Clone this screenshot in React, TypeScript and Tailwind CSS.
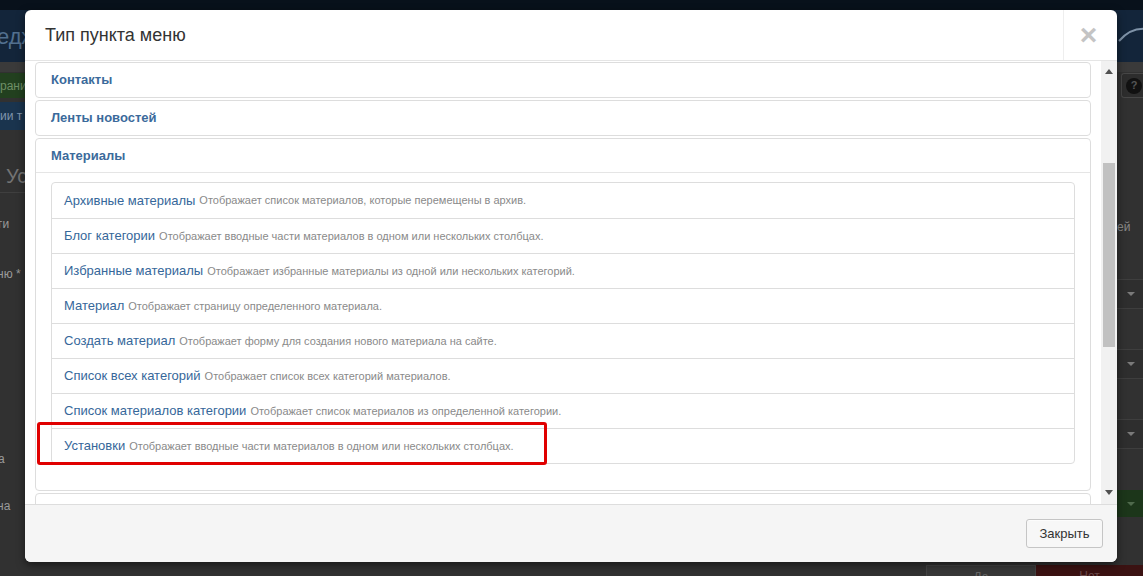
const items = [
  { title: "Архивные материалы", desc: "Отображает список материалов, которые перемещены в архив." },
  { title: "Блог категории", desc: "Отображает вводные части материалов в одном или нескольких столбцах." },
  { title: "Избранные материалы", desc: "Отображает избранные материалы из одной или нескольких категорий." },
  { title: "Материал", desc: "Отображает страницу определенного материала." },
  { title: "Создать материал", desc: "Отображает форму для создания нового материала на сайте." },
  { title: "Список всех категорий", desc: "Отображает список всех категорий материалов." },
  { title: "Список материалов категории", desc: "Отображает список материалов из определенной категории." },
  { title: "Установки", desc: "Отображает вводные части материалов в одном или нескольких столбцах." },
];

const Caret = ({ color = "#7a7a7a" }: { color?: string }) => (
  <svg width="8" height="4" viewBox="0 0 8 4">
    <path d="M0 0 L8 0 L4 4 Z" fill={color} />
  </svg>
);

const App = () => {
  return (
    <div className="relative h-[576px] w-[1143px] overflow-hidden bg-[#313131] font-['Liberation_Sans',Arial,sans-serif]">
      {/* page behind the modal */}
      <div className="flex flex-col">
        <div className="h-[10px] bg-[#08111b]" />
        <div className="flex h-[52px] items-center justify-between bg-[#13253a]">
          <span className="-ml-[3px] text-[22px] text-[#52708f]">едж</span>
          <svg width="30" height="30" viewBox="0 0 30 30" className="mr-[-4px]">
            <path d="M2 20 Q14 6 30 8" stroke="#7f93a8" strokeWidth="2" fill="none" />
          </svg>
        </div>

        <div className="flex h-[503px] justify-between">
          {/* left edge */}
          <div className="flex w-[40px] flex-col">
            <div className="h-[10px] bg-[#3a3a3a]" />
            <div className="mt-[1px] flex h-[25px] items-center bg-[#22401f] text-[12px] text-[#6e8f66]">рани</div>
            <div className="mt-[4px] flex h-[28px] items-center bg-[#1a344e] text-[12px] text-[#8096ad]">ии т</div>
            <div className="h-[30px]" />
            <div className="flex h-[33px] items-center border-b border-[#3f3f3f] pl-[6px] text-[20px] text-[#747474]">Ус</div>
            <div className="flex h-[62px] items-center -ml-[2px] text-[12px] text-[#9a9a9a]">ги</div>
            <div className="flex h-[38px] items-center -ml-[3px] text-[12px] text-[#9a9a9a]">ню *</div>
            <div className="h-[151px]" />
            <div className="flex h-[30px] items-center -ml-[2px] text-[12px] text-[#9a9a9a]">а</div>
            <div className="h-[17px]" />
            <div className="flex h-[30px] items-center -ml-[3px] text-[12px] text-[#9a9a9a]">на</div>
          </div>

          {/* right edge */}
          <div className="flex w-[40px] flex-col items-end">
            <div className="h-[10px] w-full bg-[#3a3a3a]" />
            <div className="mt-[1px] flex h-[25px] w-[22px] items-center rounded-l-[3px] border border-r-0 border-[#474747] bg-[#2d2d2d] pl-[4px]">
              <span className="flex h-[16px] w-[16px] items-center justify-center rounded-full bg-[#111] text-[11px] font-bold text-[#555]">?</span>
            </div>
            <div className="h-[114px]" />
            <div className="flex h-[30px] w-full items-center text-[12px] text-[#8a8a8a]">
              <span className="ml-[14px]">ей</span>
            </div>
            <div className="h-[37px]" />
            <div className="flex h-[30px] w-full items-center justify-end border-y border-[#3e3e3e] bg-[#2e2e2e] pr-[8px]"><Caret /></div>
            <div className="h-[40px]" />
            <div className="flex h-[30px] w-full items-center justify-end border-y border-[#3e3e3e] bg-[#2e2e2e] pr-[8px]"><Caret /></div>
            <div className="h-[40px]" />
            <div className="flex h-[30px] w-full items-center justify-end border-y border-[#3e3e3e] bg-[#2e2e2e] pr-[8px]"><Caret /></div>
            <div className="h-[41px]" />
            <div className="flex h-[27px] w-full items-center justify-end bg-[#1c361a] pr-[8px]"><Caret color="#4f6a4c" /></div>
          </div>
        </div>

        <div className="flex h-[20px] justify-end">
          <span className="flex w-[110px] justify-center border border-[#444] bg-[#383838] pt-[2px] text-[12px] text-[#666]">Да</span>
          <span className="flex w-[107px] justify-center bg-[#3b1212] pt-[2px] text-[12px] text-[#6a4a4a]">Нет</span>
        </div>
      </div>

      {/* modal */}
      <div className="absolute left-[25px] top-[10px] flex h-[552px] w-[1092px] flex-col overflow-hidden rounded-[6px] bg-white shadow-[0_3px_9px_rgba(0,0,0,0.5)]">
        <div className="flex h-[51px] shrink-0 border-b border-[#e5e5e5]">
          <h3 className="flex flex-1 items-center pl-[20px] text-[18px] text-[#333]">Тип пункта меню</h3>
          <div className="flex w-[54px] items-center justify-center border-l border-[#eee] pb-[1px] pr-[4px] text-[30px] font-bold leading-none text-[#c4c4c4]">
            ×
          </div>
        </div>

        <div className="flex min-h-0 flex-1">
          <div className="flex-1 overflow-hidden px-[10px] pt-[1px]">
            <div className="mb-[2px] rounded-[4px] border border-[#ddd]">
              <div className="flex h-[34px] items-center px-[15px] text-[13px] font-bold text-[#3b6a9b]">Контакты</div>
            </div>
            <div className="mb-[2px] rounded-[4px] border border-[#ddd]">
              <div className="flex h-[34px] items-center px-[15px] text-[13px] font-bold text-[#3b6a9b]">Ленты новостей</div>
            </div>
            <div className="mb-[2px] rounded-[4px] border border-[#ddd]">
              <div className="flex h-[34px] items-center border-b border-[#e5e5e5] px-[15px] text-[13px] font-bold text-[#3b6a9b]">Материалы</div>
              <div className="px-[15px] pb-[26px] pt-[9px]">
                <ul className="rounded-[4px] border border-[#ddd]">
                  {items.map((item, index) => (
                    <li
                      key={index}
                      className={`flex h-[35px] items-center px-[12px] ${index > 0 ? "border-t border-[#ddd]" : "h-[34px]"}`}
                    >
                      <span className="text-[13px] text-[#36679a]">{item.title}</span>
                      <span className="ml-[4px] text-[11px] text-[#8a8a8a]">{item.desc}</span>
                    </li>
                  ))}
                </ul>
              </div>
            </div>
            <div className="h-[40px] rounded-[4px] border border-[#ddd]" />
          </div>

          {/* scrollbar */}
          <div className="flex w-[16px] flex-col items-center bg-[#f1f1f1]">
            <svg width="8" height="5" viewBox="0 0 8 5" className="mt-[8px]">
              <path d="M0 5 L4 0 L8 5 Z" fill="#505050" />
            </svg>
            <div className="mt-[89px] h-[184px] w-[12px] bg-[#c1c1c1]" />
            <div className="flex-1" />
            <svg width="8" height="5" viewBox="0 0 8 5" className="mb-[9px]">
              <path d="M0 0 L8 0 L4 5 Z" fill="#505050" />
            </svg>
          </div>
        </div>

        <div className="flex h-[58px] shrink-0 justify-end border-t border-[#ddd] bg-[#f5f5f5] pr-[14px] pt-[14px]">
          <button className="h-[29px] w-[77px] rounded-[3px] border border-[#c5c5c5] bg-[#f7f7f7] text-[13px] text-[#333] shadow-[inset_0_1px_0_rgba(255,255,255,0.6)]">
            Закрыть
          </button>
        </div>

        {/* highlight annotation */}
        <div className="absolute left-[12px] top-[412px] h-[43px] w-[510px] rounded-[3px] border-[3px] border-[#e00000]" />
      </div>
    </div>
  );
};

export default App;
